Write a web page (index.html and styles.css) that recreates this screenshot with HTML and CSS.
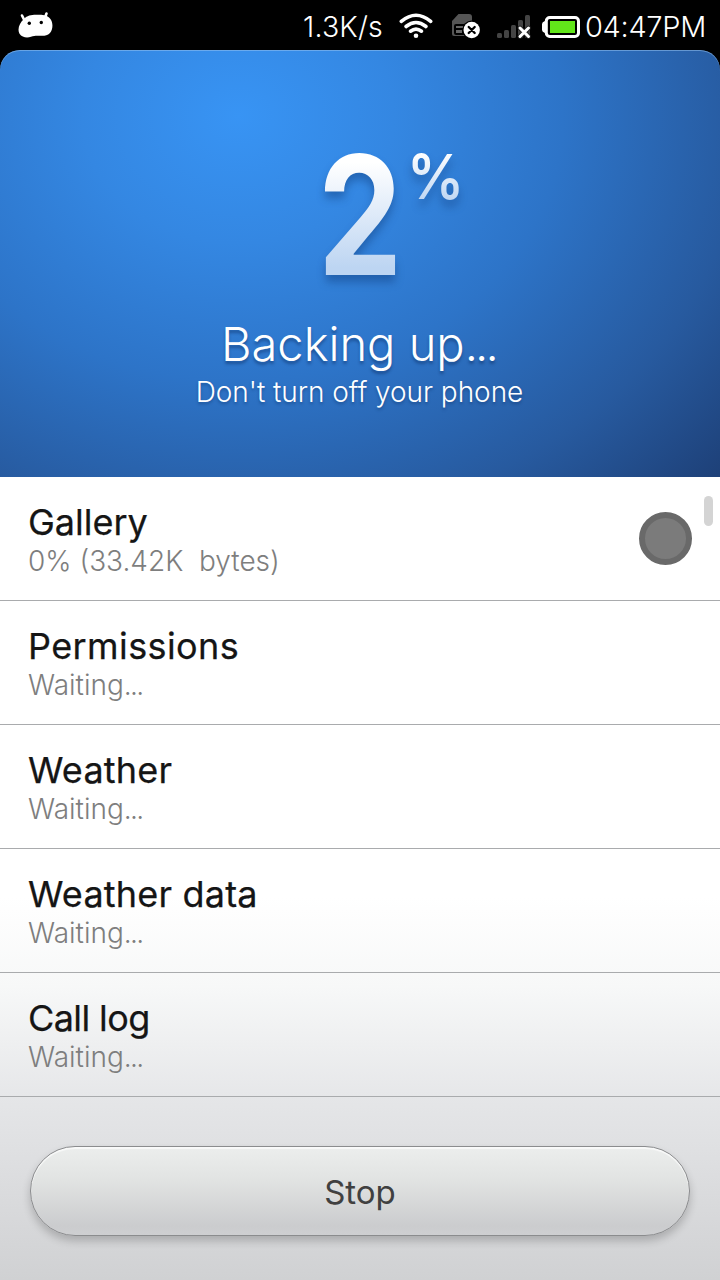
FILE: index.html
```html
<!DOCTYPE html>
<html lang="en">
<head>
<meta charset="utf-8">
<title>Backup</title>
<link rel="stylesheet" href="styles.css">
</head>
<body>
<div class="screen">
  <header class="status-bar">
    <svg class="android-icon" width="36" height="28" viewBox="0 0 36 28">
      <path d="M4 4.500l2 4M28.500 2.500l-1.800 5" stroke="#fff" stroke-width="2.600" stroke-linecap="round"/>
      <path d="M6 8C9 4.500 13 4 18 3.800c7-.3 11 0 14 3.700 3.500 4 3 11 0 14.500-3 3-6 3-10 2.800-4-.2-6 0-9 1-4 1.200-9 .7-11.500-3C-1 18 1.500 12 6 8z" fill="#fff"/>
      <circle cx="11.300" cy="12.300" r="1.700"/><circle cx="23.300" cy="11.500" r="1.700"/>
    </svg>
    <span class="speed">1.3K/s</span>
    <svg class="wifi-icon" width="34" height="26" viewBox="0 0 34 26">
      <g fill="none" stroke="#fff" stroke-width="3.600" stroke-linecap="round">
        <path d="M2.300 8.300Q17-3.800 31.700 8.300"/><path d="M7 13.500Q17 5.500 27 13.500"/><path d="M11.500 18.200Q17 14 22.500 18.200"/>
      </g>
      <circle cx="17" cy="22.800" r="2.300" fill="#fff"/>
    </svg>
    <svg class="sim-icon" width="30" height="26" viewBox="0 0 30 26">
      <path d="M7.500 1H18q3 0 3 3v19H3q-2 0-2-2V8z" fill="#555"/>
      <path d="M5 11h11v11H5q-2 0-2-2v-7q0-2 2-2z" fill="#000"/>
      <path d="M5 13h9v2H5zM5 17h6v3H5z" fill="#666"/>
      <circle cx="20.700" cy="17" r="9.400" fill="#000"/><circle cx="20.700" cy="17" r="8.200" fill="#fff"/>
      <path d="M17.700 14l6 6m0-6l-6 6" stroke="#000" stroke-width="2.300" stroke-linecap="round"/>
    </svg>
    <svg class="signal-icon" width="34" height="24" viewBox="0 0 34 24">
      <g fill="#444"><rect y="18" width="5" height="5" rx="1.500"/><rect x="7" y="15" width="5" height="8" rx="1.500"/><rect x="14" y="10" width="5" height="13" rx="1.500"/><rect x="21" y="5" width="5" height="18" rx="1.500"/><rect x="28" width="5" height="23" rx="1.500"/></g>
      <path d="M23 13l8.500 8.500m0-8.500L23 21.500" stroke="#222" stroke-width="4.600" stroke-linecap="round"/>
      <path d="M23 13l8.500 8.500m0-8.500L23 21.500" stroke="#fff" stroke-width="3" stroke-linecap="round"/>
    </svg>
    <svg class="battery-icon" width="38" height="22" viewBox="0 0 38 22">
      <path d="M0 8q0-2 3-3v12q-3-1-3-3z" fill="#fff"/>
      <rect x="4.300" y="1.500" width="32.200" height="19" rx="3.500" fill="#000" stroke="#fff" stroke-width="3"/>
      <rect x="8" y="5" width="25" height="12" fill="#62e61a"/>
    </svg>
    <span class="clock">04:47PM</span>
  </header>

  <section class="hero">
    <div class="percent"><span class="digit">2</span><span class="sign">%</span></div>
    <h1 class="title">Backing up<span class="dots">...</span></h1>
    <p class="hint">Don't turn off your phone</p>
  </section>

  <main class="list">
    <div class="row">
      <div class="info"><h2 class="name">Gallery</h2><p class="state">0% (33.42K&nbsp; bytes)</p></div>
      <span class="spinner"></span>
      <span class="scroll-thumb"></span>
    </div>
    <div class="row"><div class="info"><h2 class="name permissions">Permissions</h2><p class="state">Waiting<span class="dots">...</span></p></div></div>
    <div class="row"><div class="info"><h2 class="name weather">Weather</h2><p class="state">Waiting<span class="dots">...</span></p></div></div>
    <div class="row"><div class="info"><h2 class="name weather">Weather data</h2><p class="state">Waiting<span class="dots">...</span></p></div></div>
    <div class="row"><div class="info"><h2 class="name call-log">Call log</h2><p class="state">Waiting<span class="dots">...</span></p></div></div>
  </main>

  <footer class="footer"><button class="stop">Stop</button></footer>
</div>
</body>
</html>
```
FILE: styles.css
```css
* { box-sizing: border-box; }
body { margin: 0; background: #000; font-family: Inter, "Liberation Sans", sans-serif; }
h1, h2, p { margin: 0; font-weight: 400; }
.screen { width: 720px; height: 1280px; display: flex; flex-direction: column; overflow: hidden; background: #000; }

.status-bar { height: 50px; display: flex; align-items: flex-start; padding: 0 13px 0 18px; color: #fff; white-space: nowrap; }
.status-bar svg { flex: none; display: block; }
.android-icon { margin-top: 11px; }
.speed { margin-left: auto; margin-top: 9px; width: 80px; font-size: 28.500px; line-height: 36px; font-weight: 300; letter-spacing: .2px; }
.wifi-icon { margin: 13px 0 0 16px; }
.sim-icon { margin: 13px 0 0 18px; }
.signal-icon { margin: 15px 0 0 16px; }
.battery-icon { margin: 16px 0 0 11px; }
.clock { margin: 9px 0 0 5px; width: 122px; font-size: 29px; line-height: 36px; font-weight: 300; letter-spacing: -.3px; }

.hero {
  height: 427px; flex: none; padding-top: 90px; text-align: center; color: #fff;
  border-radius: 20px 20px 0 0;
  background: radial-gradient(650px 530px at 238px 66px, #3894f4 0%, #3487e2 24%, #2d74c8 50%, #275a9f 78%, #1e4179 100%);
  box-shadow: inset 0 1px 0 rgba(150, 195, 240, .55);
}
.percent { height: 170px; display: flex; align-items: flex-start; padding-left: 307px; filter: drop-shadow(0 7px 4px rgba(10, 50, 110, .4)); }
.digit, .sign { color: transparent; background: linear-gradient(#fff 15%, #bdd5f2 85%); -webkit-background-clip: text; background-clip: text; }
.digit { width: 106px; font: 700 166px/150px Inter, sans-serif; transform: scaleX(.81); }
.sign { margin: 1px 0 0 -6px; font: 600 62px/72px Inter, sans-serif; transform: scaleX(.92); transform-origin: left; }
.title { font-size: 47px; line-height: 60px; font-weight: 300; margin-top: 4px; padding-right: 3px; text-shadow: 0 3px 3px rgba(10, 40, 90, .45); }
.hint { font-size: 28px; line-height: 36px; font-weight: 300; letter-spacing: -.05px; text-shadow: 0 2px 3px rgba(10, 40, 90, .4); padding-right: 1px; }
.dots { letter-spacing: -.06em; }

.list { flex: none; background: linear-gradient(#fff 0, #fff 420px, #f7f8f8 510px, #e6e7e9 620px); }
.row { position: relative; display: flex; justify-content: space-between; height: 124px; padding: 24px 28px 0; border-bottom: 1px solid #a9abad; }
.name { font-size: 36px; line-height: 42px; color: #151515; white-space: nowrap; -webkit-text-stroke: .25px #151515; }
.permissions { letter-spacing: .4px; }
.weather { letter-spacing: .2px; }
.call-log { letter-spacing: -.6px; }
.state { font-size: 28px; line-height: 36px; font-weight: 300; color: #7e7e7e; white-space: nowrap; }
.spinner { width: 53px; height: 53px; margin-top: 11px; border-radius: 50%; background: #7b7b7b; border: 6px solid #696969; }
.scroll-thumb { position: absolute; right: 7px; top: 19px; width: 9px; height: 30px; border-radius: 5px; background: #d4d4d4; }

.footer { flex: 1; padding: 49px 30px 0; background: linear-gradient(#e5e6e8, #d0d1d3); }
.stop {
  display: block; width: 100%; height: 90px; padding: 0; border: 1px solid #8b8c8e; border-radius: 45px;
  background: linear-gradient(#eceeed, #e1e3e2 38%, #cbccce 90%, #cecfd1);
  box-shadow: 0 5px 8px rgba(0, 0, 0, .2), inset 0 2px 1px rgba(255, 255, 255, .7);
  color: #404040; font: 400 33px/90px Inter, "Liberation Sans", sans-serif;
}
```
